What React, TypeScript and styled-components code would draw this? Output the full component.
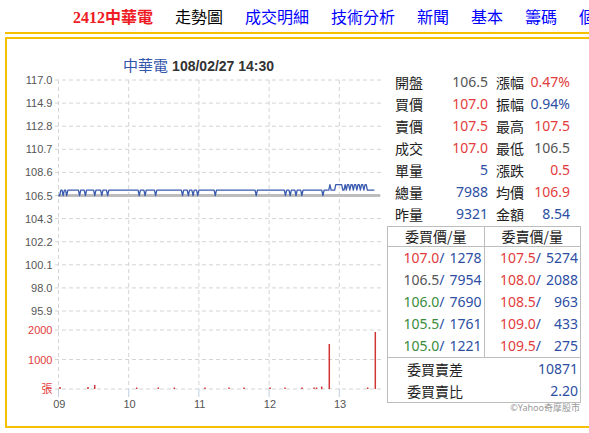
import React from 'react';
import styled, { createGlobalStyle } from 'styled-components';

const RED = '#e23c3c';
const BLUE = '#2c4ea3';
const GREY = '#555555';
const GREEN = '#3a8c3a';
const GOLD = '#f5c000';

type Tone = 'up' | 'flat' | 'down' | 'vol';
const toneColor = (t: Tone) =>
  t === 'up' ? RED : t === 'down' ? GREEN : t === 'flat' ? GREY : BLUE;

const GlobalStyle = createGlobalStyle`
  html, body { margin: 0; padding: 0; overflow: hidden; background: #fff; }
  body { font-family: "Noto Sans", "Noto Sans CJK TC", sans-serif; color: #222; }
`;

const Page = styled.div`
  width: 680px;
  padding-left: 5px;
`;

const Nav = styled.nav`
  height: 32px;
  display: flex;
  align-items: center;
  gap: 22px;
  padding-left: 68px;
  border-bottom: 2px solid ${GOLD};
  margin-bottom: 3px;
  font-family: "Noto Sans CJK TC", sans-serif;
  font-size: 16px;
  white-space: nowrap;
`;

const NavItem = styled.span<{ $kind: 'brand' | 'current' | 'link' }>`
  color: ${(p) => (p.$kind === 'brand' ? '#ee1c25' : p.$kind === 'current' ? '#000' : '#0000ff')};
  font-weight: ${(p) => (p.$kind === 'brand' ? 700 : 400)};
  font-family: ${(p) =>
    p.$kind === 'brand' ? '"Liberation Serif", "Noto Sans CJK TC", serif' : '"Noto Sans CJK TC", sans-serif'};
`;

const Board = styled.div`
  height: 387px;
  border: 2px solid ${GOLD};
  border-right: none;
  display: flex;
  align-items: flex-start;
`;

const ChartColumn = styled.div`
  width: 378px;
  display: flex;
  flex-direction: column;
`;

const ChartTitle = styled.div`
  margin-top: 16px;
  height: 20px;
  line-height: 20px;
  padding-left: 5px;
  text-align: center;
  white-space: nowrap;
`;

const TitleName = styled.span`
  font-family: "Noto Sans CJK TC", sans-serif;
  font-size: 15px;
  color: #3355aa;
`;

const TitleTime = styled.span`
  font-family: "Liberation Sans", Arial, sans-serif;
  font-size: 14px;
  font-weight: 700;
  color: #333;
`;

const ChartSvg = styled.svg`
  display: block;
`;

const Panel = styled.div`
  width: 194px;
  padding: 32px 2px 0 2px;
  display: flex;
  flex-direction: column;
`;

const Stats = styled.div`
  margin-left: 8px;
  width: 183px;
  display: grid;
  grid-template-columns: 28px 65px 28px 54px;
  column-gap: 0;
  grid-auto-rows: 22px;
  font-size: 14px;
  line-height: 22px;
  white-space: nowrap;
`;

const StatLabel = styled.span<{ $second?: boolean }>`
  font-family: "Noto Sans CJK TC", sans-serif;
  color: #222;
  margin-left: ${(p) => (p.$second ? '8px' : '0')};
`;

const StatValue = styled.span<{ $tone: Tone }>`
  text-align: right;
  color: ${(p) => toneColor(p.$tone)};
`;

const Book = styled.table`
  margin-top: 1px;
  width: 194px;
  border-collapse: collapse;
  border: 1px solid #bdbdbd;
  font-size: 14px;
  white-space: nowrap;
`;

const HeadCell = styled.th<{ $divider?: boolean }>`
  height: 19px;
  padding: 0;
  line-height: 19px;
  font-weight: 400;
  font-family: "Noto Sans CJK TC", sans-serif;
  color: #222;
  text-align: center;
  border-bottom: 1px solid #bdbdbd;
  border-right: ${(p) => (p.$divider ? '1px solid #bdbdbd' : 'none')};
`;

const QuoteCell = styled.td<{ $divider?: boolean }>`
  height: 22px;
  padding: 0 2px 0 0;
  line-height: 22px;
  text-align: right;
  width: 50%;
  border-right: ${(p) => (p.$divider ? '1px solid #bdbdbd' : 'none')};
`;

const Price = styled.span<{ $tone: Tone }>`
  color: ${(p) => toneColor(p.$tone)};
`;

const Qty = styled.span`
  color: ${BLUE};
  display: inline-block;
  min-width: 37px;
  text-align: right;
`;

const Slash = styled.span`
  color: ${BLUE};
`;

const SummaryRow = styled.tr<{ $first?: boolean }>`
  border-top: ${(p) => (p.$first ? '1px solid #bdbdbd' : 'none')};
`;

const SummaryLabel = styled.td`
  height: 22px;
  padding: 0 0 0 19px;
  line-height: 22px;
  font-family: "Noto Sans CJK TC", sans-serif;
  color: #222;
`;

const SummaryValue = styled.td`
  height: 22px;
  padding: 0 2px 0 0;
  line-height: 22px;
  text-align: right;
  color: ${BLUE};
`;

const Credit = styled.div`
  margin-top: 0;
  padding-right: 1px;
  text-align: right;
  font-size: 9px;
  line-height: 10px;
  color: #999;
  font-family: "Noto Sans", "Noto Sans CJK TC", sans-serif;
`;

const navItems: { label: string; kind: 'brand' | 'current' | 'link' }[] = [
  { label: '2412中華電', kind: 'brand' },
  { label: '走勢圖', kind: 'current' },
  { label: '成交明細', kind: 'link' },
  { label: '技術分析', kind: 'link' },
  { label: '新聞', kind: 'link' },
  { label: '基本', kind: 'link' },
  { label: '籌碼', kind: 'link' },
  { label: '個股健診', kind: 'link' },
];

const stats: [string, string, Tone, string, string, Tone][] = [
  ['開盤', '106.5', 'flat', '漲幅', '0.47%', 'up'],
  ['買價', '107.0', 'up', '振幅', '0.94%', 'vol'],
  ['賣價', '107.5', 'up', '最高', '107.5', 'up'],
  ['成交', '107.0', 'up', '最低', '106.5', 'flat'],
  ['單量', '5', 'vol', '漲跌', '0.5', 'up'],
  ['總量', '7988', 'vol', '均價', '106.9', 'up'],
  ['昨量', '9321', 'vol', '金額', '8.54', 'vol'],
];

const bids: [string, Tone, string][] = [
  ['107.0', 'up', '1278'],
  ['106.5', 'flat', '7954'],
  ['106.0', 'down', '7690'],
  ['105.5', 'down', '1761'],
  ['105.0', 'down', '1221'],
];
const asks: [string, Tone, string][] = [
  ['107.5', 'up', '5274'],
  ['108.0', 'up', '2088'],
  ['108.5', 'up', '963'],
  ['109.0', 'up', '433'],
  ['109.5', 'up', '275'],
];

/* ---------- chart geometry (page coordinates) ---------- */
const X0 = 58.5;
const XSTEP = 70.2;
const PX_PER_MIN = XSTEP / 60;
const GRID_TOP = 80;
const GRID_STEP = 23.1;
const priceLabels = ['117.0', '114.9', '112.8', '110.7', '108.6', '106.5', '104.3', '102.2', '100.1', '98.0', '95.9'];
const VOL_BASE = 389;
const py = (p: number) => 195.5 - ((p - 106.5) / 2.13) * GRID_STEP;

const buildLevels = () => {
  const lv: number[] = Array(271).fill(107.0);
  const dips = [0, 4, 7, 18, 23, 31, 37, 42, 69, 74, 83, 106, 111, 115, 119, 134, 169, 194, 198, 203, 208, 226];
  dips.forEach((m) => (lv[m] = 106.5));
  lv[1] = 106.5;
  lv[232] = 107.5;
  for (let m = 237; m <= 242; m++) lv[m] = 107.5;
  for (let m = 245; m <= 264; m++) lv[m] = m % 3 === 0 ? 107.0 : 107.5;
  return lv;
};

const levels = buildLevels();
const pricePath = levels
  .map((p, m) => `${m === 0 ? 'M' : 'L'}${(X0 + m * PX_PER_MIN).toFixed(2)},${py(p).toFixed(2)}`)
  .join(' ');

const volBars: [number, number][] = [
  [60, 2], [88, 2], [94.7, 4], [136.7, 1.5], [158.3, 1.5], [174.3, 1.5], [205, 1.5], [229, 1.5],
  [244, 1.5], [270, 1.5], [285, 1.5], [302, 1.5], [314, 1.5], [316.5, 1.5], [321.7, 2.5],
  [329.3, 45], [367.7, 1.5], [375.3, 57],
];

const Chart: React.FC = () => {
  const vx = [0, 1, 2, 3, 4].map((i) => X0 + i * XSTEP);
  const gridColor = '#d4d4d4';
  const font = '"Liberation Sans", Arial, "Noto Sans CJK TC", sans-serif';
  return (
    <ChartSvg width={378} height={350} viewBox="7 75 378 350">
      {priceLabels.map((label, i) => {
        const y = GRID_TOP + i * GRID_STEP;
        return (
          <g key={label}>
            <line x1={55} x2={381} y1={y} y2={y} stroke={gridColor} strokeDasharray="4,3" />
            <text x={52.5} y={y + 4} textAnchor="end" fontSize={11} fill={GREY} fontFamily={font}>
              {label}
            </text>
          </g>
        );
      })}
      {[
        { y: 330, label: '2000' },
        { y: 359.5, label: '1000' },
        { y: 389, label: '張' },
      ].map(({ y, label }) => (
        <g key={label}>
          <line x1={55} x2={381} y1={y} y2={y} stroke={gridColor} strokeDasharray="4,3" />
          <text x={52.5} y={y + 4} textAnchor="end" fontSize={11} fill={RED} fontFamily={font}>
            {label}
          </text>
        </g>
      ))}
      {vx.map((x, i) => (
        <g key={x}>
          <line x1={x} x2={x} y1={GRID_TOP} y2={VOL_BASE} stroke={gridColor} strokeDasharray="4,3" />
          <line x1={x} x2={x} y1={VOL_BASE} y2={397} stroke="#c0d0e0" />
          <text x={x + 0.8} y={408} textAnchor="middle" fontSize={11} fill={GREY} fontFamily={font}>
            {['09', '10', '11', '12', '13'][i]}
          </text>
        </g>
      ))}
      <line x1={58} x2={380} y1={195.6} y2={195.6} stroke="#bdbdbd" strokeWidth={3} />
      <path d={pricePath} fill="none" stroke="#3a5bb0" strokeWidth={1.3} strokeLinejoin="round" />
      {volBars.map(([x, h]) => (
        <line key={x} x1={x} x2={x} y1={VOL_BASE} y2={VOL_BASE - h} stroke="#d03434" strokeWidth={1.5} />
      ))}
    </ChartSvg>
  );
};

export default function App() {
  return (
    <Page>
      <GlobalStyle />
      <Nav>
        {navItems.map((n) => (
          <NavItem key={n.label} $kind={n.kind}>
            {n.label}
          </NavItem>
        ))}
      </Nav>
      <Board>
        <ChartColumn>
          <ChartTitle>
            <TitleName>中華電</TitleName> <TitleTime>108/02/27 14:30</TitleTime>
          </ChartTitle>
          <Chart />
        </ChartColumn>
        <Panel>
          <Stats>
            {stats.map(([l1, v1, t1, l2, v2, t2]) => (
              <React.Fragment key={l1}>
                <StatLabel>{l1}</StatLabel>
                <StatValue $tone={t1}>{v1}</StatValue>
                <StatLabel $second>{l2}</StatLabel>
                <StatValue $tone={t2}>{v2}</StatValue>
              </React.Fragment>
            ))}
          </Stats>
          <Book>
            <thead>
              <tr>
                <HeadCell $divider>委買價/量</HeadCell>
                <HeadCell>委賣價/量</HeadCell>
              </tr>
            </thead>
            <tbody>
              {bids.map((b, i) => (
                <tr key={b[0]}>
                  <QuoteCell $divider>
                    <Price $tone={b[1]}>{b[0]}</Price>
                    <Slash>/</Slash>
                    <Qty>{b[2]}</Qty>
                  </QuoteCell>
                  <QuoteCell>
                    <Price $tone={asks[i][1]}>{asks[i][0]}</Price>
                    <Slash>/</Slash>
                    <Qty>{asks[i][2]}</Qty>
                  </QuoteCell>
                </tr>
              ))}
              <SummaryRow $first>
                <SummaryLabel>委買賣差</SummaryLabel>
                <SummaryValue>10871</SummaryValue>
              </SummaryRow>
              <SummaryRow>
                <SummaryLabel>委買賣比</SummaryLabel>
                <SummaryValue>2.20</SummaryValue>
              </SummaryRow>
            </tbody>
          </Book>
          <Credit>©Yahoo奇摩股市</Credit>
        </Panel>
      </Board>
    </Page>
  );
}
